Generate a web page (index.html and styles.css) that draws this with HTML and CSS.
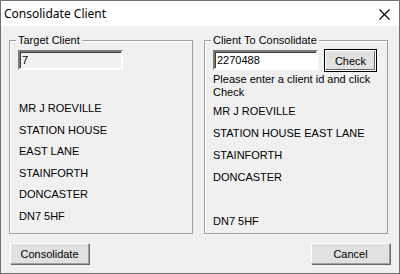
FILE: index.html
```html
<!DOCTYPE html>
<html lang="en">
<head>
    <meta charset="UTF-8">
    <title>Consolidate Client</title>
    <link rel="stylesheet" href="styles.css">
</head>
<body>
    <div class="window">
        <div class="titlebar">
            <span class="title">Consolidate Client</span>
            <svg class="close" width="11" height="11" viewBox="0 0 11 11">
                <path d="M0.5 0.5 L10.5 10.5 M10.5 0.5 L0.5 10.5" stroke="#000" stroke-width="1.1" fill="none"/>
            </svg>
        </div>

        <div class="content">
            <div class="groups">
                <fieldset class="group">
                    <legend>Target Client</legend>
                    <input type="text" class="field readonly" value="7" readonly>
                    <div class="address target">
                        <div>MR J ROEVILLE</div>
                        <div>STATION HOUSE</div>
                        <div>EAST LANE</div>
                        <div>STAINFORTH</div>
                        <div>DONCASTER</div>
                        <div>DN7 5HF</div>
                    </div>
                </fieldset>

                <fieldset class="group">
                    <legend>Client To Consolidate</legend>
                    <div class="search">
                        <input type="text" class="field" value="2270488">
                        <button class="btn default">Check</button>
                    </div>
                    <p class="hint">Please enter a client id and click Check</p>
                    <div class="address source">
                        <div>MR J ROEVILLE</div>
                        <div>STATION HOUSE EAST LANE</div>
                        <div>STAINFORTH</div>
                        <div>DONCASTER</div>
                        <div></div>
                        <div>DN7 5HF</div>
                    </div>
                </fieldset>
            </div>

            <div class="actions">
                <button class="btn wide">Consolidate</button>
                <button class="btn wide">Cancel</button>
            </div>
        </div>
    </div>
</body>
</html>
```

FILE: styles.css
```css
body {
    margin: 0;
    padding: 0;
    font-family: "Liberation Sans", Arial, sans-serif;
    font-size: 11px;
    color: #000;
    background: #f0f0f0;
}
.window {
    width: 400px;
    height: 274px;
    box-sizing: border-box;
    border: 1px solid #707070;
    background: #f0f0f0;
    display: flex;
    flex-direction: column;
}
.titlebar {
    height: 25px;
    background: #fff;
    display: flex;
    align-items: center;
    justify-content: space-between;
    padding: 0 9px 0 3px;
}
.title {
    font-family: "Noto Sans", "Open Sans", sans-serif;
    font-size: 12px;
}
.close {
    display: block;
    margin-top: 1px;
}
.content {
    padding: 7px 11px 0 8px;
}
.groups {
    display: grid;
    grid-template-columns: 184px 184px;
    gap: 11px;
}
.group {
    margin: 0;
    padding: 0 8px;
    height: 201px;
    box-sizing: border-box;
    border: 1px solid #a0a0a0;
    box-shadow: inset 1px 1px 0 #fff;
    min-width: 0;
}
.group legend {
    padding: 0 2px;
    margin-left: -2px;
    line-height: 14px;
}
.field {
    display: block;
    box-sizing: border-box;
    width: 105px;
    height: 20px;
    margin: 3px 0 0;
    padding: 0 2px;
    font-family: "Liberation Sans", Arial, sans-serif;
    font-size: 11px;
    color: #000;
    background: #fff;
    border: 2px solid;
    border-color: #7a7a7a #fff #fff #7a7a7a;
    box-shadow: inset 1px 1px 0 #404040;
    outline: none;
}
.field.readonly {
    background: #f0f0f0;
}
.address.target {
    margin-top: 28px;
    line-height: 21.5px;
    padding-left: 1px;
}
.search {
    display: flex;
    gap: 7px;
    align-items: flex-start;
}
.search .field {
    margin-top: 3px;
}
.hint {
    margin: 2px 0 0;
    line-height: 13px;
}
.address.source {
    margin-top: 1px;
}
.address.source div {
    height: 22px;
    line-height: 22px;
}
.btn {
    box-sizing: border-box;
    height: 21px;
    padding: 0;
    font-family: "Liberation Sans", Arial, sans-serif;
    font-size: 11px;
    color: #000;
    background: #e1e1e1;
    border: 1px solid;
    border-color: #fff #a0a0a0 #a0a0a0 #fff;
    box-shadow: 1px 1px 0 #696969;
}
.btn.default {
    width: 51px;
    margin-top: 3px;
    border: 1px solid #fff;
    outline: 1px solid #000;
    box-shadow: inset -1px -1px 0 #696969, inset 1px 1px 0 #e3e3e3;
}
.btn.wide {
    width: 79px;
}
.actions {
    display: flex;
    justify-content: space-between;
    margin: 9px -2px 0 1px;
}
```
